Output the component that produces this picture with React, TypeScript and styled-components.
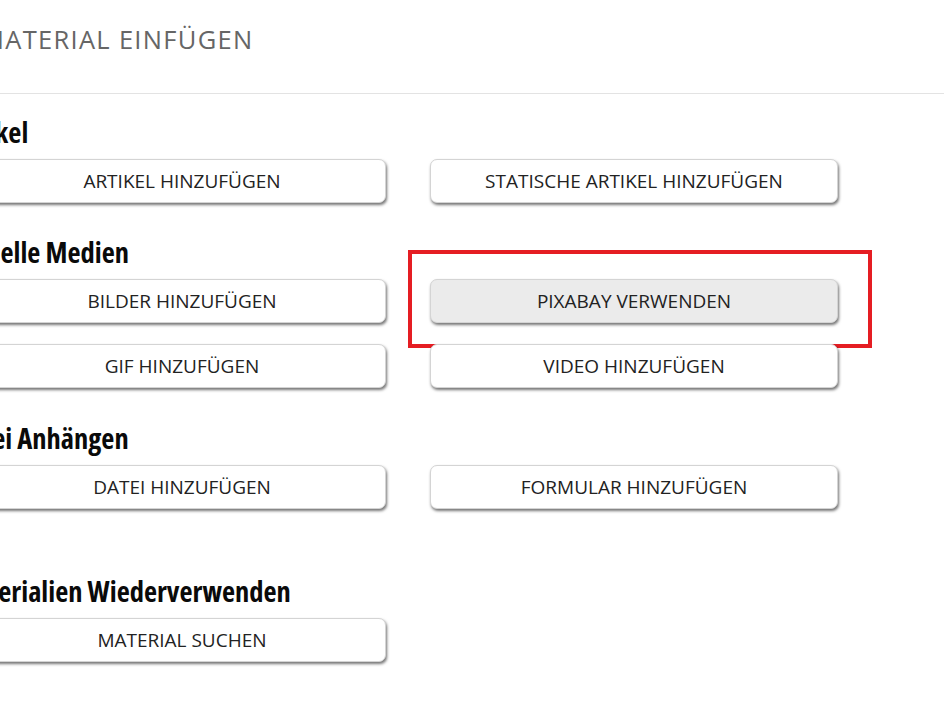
import React from 'react'
import styled, { createGlobalStyle } from 'styled-components'

const GlobalStyle = createGlobalStyle`
  html {
    overflow: hidden;
  }
  body {
    margin: 0;
    padding: 0;
    background: #fff;
    font-family: 'Open Sans', 'Noto Sans', sans-serif;
    color: #222;
  }
`

const Page = styled.div`
  width: 1000px;
  margin-left: -22px;
  padding-bottom: 40px;
`

const Header = styled.div`
  padding: 23px 0 38px 3px;
  border-bottom: 1px solid #e3e3e3;
  .title {
    margin: 0;
    font-size: 25.5px;
    line-height: 32px;
    font-weight: 400;
    color: #666;
    text-transform: uppercase;
    letter-spacing: 1.3px;
  }
`

const Body = styled.div`
  padding-top: 19px;
`

const Section = styled.section<{ spaceBefore?: number }>`
  margin-top: ${(p) => p.spaceBefore ?? 0}px;
  .heading {
    margin: 0 0 11px -24px;
    padding-top: 3px;
    font-size: 28.5px;
    line-height: 32px;
    font-weight: 700;
    font-stretch: condensed;
    color: #0a0a0a;
  }
`

const ButtonGrid = styled.div`
  display: grid;
  grid-template-columns: 408px 408px;
  column-gap: 44px;
  row-gap: 21px;
`

const Slot = styled.div`
  position: relative;
`

const ActionButton = styled.button<{ active?: boolean }>`
  display: block;
  width: 100%;
  height: 44px;
  padding: 0 12px;
  border: 1px solid #d4d4d4;
  border-radius: 7px;
  background: ${(p) => (p.active ? '#ebebeb' : '#fff')};
  box-shadow: 1px 2px 3px rgba(0, 0, 0, 0.55);
  font-family: 'Open Sans', 'Noto Sans', sans-serif;
  font-size: 19px;
  color: #222;
  text-transform: uppercase;
  cursor: pointer;
`

// red highlight frame drawn over a button
const Highlight = styled.div`
  position: absolute;
  top: -29px;
  left: -22px;
  width: 464px;
  height: 98px;
  box-sizing: border-box;
  border: 4px solid #e51d23;
  pointer-events: none;
`

type Action = { label: string; active?: boolean; marked?: boolean }
type Group = { title: string; space: number; actions: Action[] }

const groups: Group[] = [
  {
    title: 'Artikel',
    space: 0,
    actions: [{ label: 'Artikel hinzufügen' }, { label: 'Statische Artikel hinzufügen' }],
  },
  {
    title: 'Visuelle Medien',
    space: 30,
    actions: [
      { label: 'Bilder hinzufügen' },
      { label: 'Pixabay verwenden', active: true, marked: true },
      { label: 'GIF hinzufügen' },
      { label: 'Video hinzufügen' },
    ],
  },
  {
    title: 'Datei Anhängen',
    space: 31,
    actions: [{ label: 'Datei hinzufügen' }, { label: 'Formular hinzufügen' }],
  },
  {
    title: 'Materialien Wiederverwenden',
    space: 63,
    actions: [{ label: 'Material suchen' }],
  },
]

const App = () => (
  <>
    <GlobalStyle />
    <Page>
      <Header>
        <h1 className="title">Material einfügen</h1>
      </Header>
      <Body>
        {groups.map((g) => (
          <Section key={g.title} spaceBefore={g.space}>
            <h2 className="heading">{g.title}</h2>
            <ButtonGrid>
              {g.actions.map((a) => (
                <Slot key={a.label}>
                  {a.marked && <Highlight />}
                  <ActionButton active={a.active}>{a.label}</ActionButton>
                </Slot>
              ))}
            </ButtonGrid>
          </Section>
        ))}
      </Body>
    </Page>
  </>
)

export default App
